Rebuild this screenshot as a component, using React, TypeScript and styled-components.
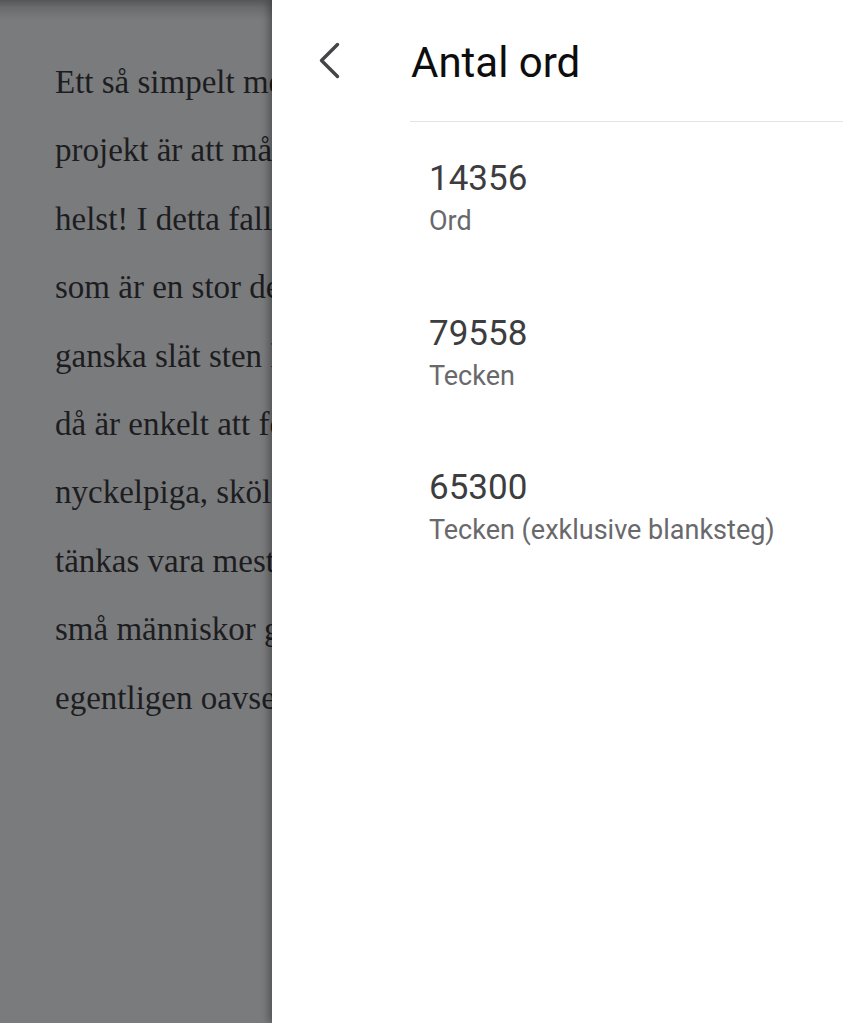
import React from "react";
import styled, { createGlobalStyle } from "styled-components";

const GlobalStyle = createGlobalStyle`
  html, body {
    margin: 0;
    padding: 0;
    height: 100%;
    overflow: hidden;
  }
  #root {
    height: 100%;
  }
`;

const Screen = styled.div`
  display: flex;
  width: 843px;
  height: 1023px;
  overflow: hidden;
`;

const Backdrop = styled.div`
  width: 272px;
  flex-shrink: 0;
  overflow: hidden;
  background: linear-gradient(
      to bottom,
      rgba(0, 0, 0, 0.3) 0px,
      rgba(0, 0, 0, 0.12) 8px,
      rgba(0, 0, 0, 0) 20px
    ),
    #7a7b7d;
  padding-top: 48px;
  box-sizing: border-box;
`;

const ArticleLine = styled.p`
  margin: 0;
  padding-left: 55px;
  white-space: nowrap;
  font-family: "Liberation Serif", "DejaVu Serif", serif;
  font-size: 33px;
  line-height: 68.4px;
  color: #1d1d1f;
`;

const Drawer = styled.aside`
  flex: 1;
  background: #ffffff;
  box-shadow: -3px 0 8px rgba(0, 0, 0, 0.35);
  position: relative;
  display: flex;
  flex-direction: column;
  font-family: Roboto, "Noto Sans", Arial, sans-serif;
`;

const Header = styled.header`
  display: flex;
  height: 122px;
`;

const BackButton = styled.button`
  width: 138px;
  flex-shrink: 0;
  border: none;
  background: transparent;
  padding: 0 0 0 46px;
  margin: 0;
  display: flex;
  align-items: center;
  justify-content: flex-start;
  cursor: pointer;
`;

const TitleArea = styled.div`
  flex: 1;
  box-sizing: border-box;
  border-bottom: 1px solid #e3e3e3;
  display: flex;
  align-items: center;
  padding-top: 4px;
`;

const Title = styled.h1`
  margin: 0;
  padding-left: 1px;
  font-size: 42px;
  font-weight: 400;
  color: #0d0d0d;
  line-height: normal;
`;

const StatList = styled.div`
  display: flex;
  flex-direction: column;
  gap: 75.5px;
  padding: 36px 0 0 157px;
`;

const Stat = styled.div`
  display: flex;
  flex-direction: column;
  gap: 5px;
`;

const StatValue = styled.div`
  font-size: 35px;
  line-height: 42px;
  color: #3d3d3f;
`;

const StatLabel = styled.div`
  font-size: 27px;
  line-height: 32px;
  color: #69696b;
`;

const ChevronLeft = () => (
  <svg width="24" height="38" viewBox="0 0 24 38" fill="none">
    <path
      d="M19.5 2.5 L3.5 18.5 L19.5 34.5"
      stroke="#454547"
      strokeWidth="3.4"
      strokeLinecap="round"
      strokeLinejoin="round"
    />
  </svg>
);

const lines = [
  "Ett så simpelt men roligt",
  "projekt är att måla stenar,",
  "helst! I detta fallet en sten",
  "som är en stor del av",
  "ganska slät sten kan",
  "då är enkelt att förvandla",
  "nyckelpiga, sköldpadda",
  "tänkas vara mest",
  "små människor gillar",
  "egentligen oavsett ålder.",
];

const stats = [
  { value: "14356", label: "Ord" },
  { value: "79558", label: "Tecken" },
  { value: "65300", label: "Tecken (exklusive blanksteg)" },
];

export default function App() {
  return (
    <>
      <GlobalStyle />
      <Screen>
        <Backdrop>
          {lines.map((l) => (
            <ArticleLine key={l}>{l}</ArticleLine>
          ))}
        </Backdrop>
        <Drawer>
          <Header>
            <BackButton aria-label="Tillbaka">
              <ChevronLeft />
            </BackButton>
            <TitleArea>
              <Title>Antal ord</Title>
            </TitleArea>
          </Header>
          <StatList>
            {stats.map((s) => (
              <Stat key={s.value}>
                <StatValue>{s.value}</StatValue>
                <StatLabel>{s.label}</StatLabel>
              </Stat>
            ))}
          </StatList>
        </Drawer>
      </Screen>
    </>
  );
}
